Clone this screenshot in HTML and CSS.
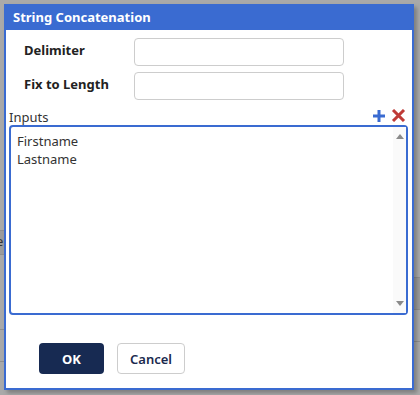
FILE: index.html
```html
<!DOCTYPE html>
<html lang="en">
<head>
    <meta charset="UTF-8">
    <title>String Concatenation</title>
    <link rel="stylesheet" href="styles.css">
</head>
<body>
    <!-- dimmed page behind the modal -->
    <div class="backdrop">
        <div class="bg-col bg-left">
            <div class="bg-row bg-row-dark">e</div>
            <div class="bg-row bg-row-tall"></div>
            <div class="bg-row bg-row-mid"></div>
            <div class="bg-row"></div>
        </div>
        <div class="bg-col bg-right">
            <div class="bg-row bg-row-dark bg-row-mid"></div>
            <div class="bg-row bg-row-mid"></div>
            <div class="bg-row"></div>
        </div>
    </div>

    <div class="dialog">
        <div class="dialog-title">String Concatenation</div>
        <div class="dialog-body">
            <div class="form-grid">
                <label class="field-label" for="delimiter">Delimiter</label>
                <input class="field-input" id="delimiter" type="text">
                <label class="field-label" for="fixLength">Fix to Length</label>
                <input class="field-input" id="fixLength" type="text">
            </div>

            <div class="list-header">
                <span class="list-label">Inputs</span>
                <span class="list-tools">
                    <svg class="tool tool-add" width="12" height="12" viewBox="0 0 12 12">
                        <path d="M6 0v12M0 6h12" stroke="#3a6bd1" stroke-width="3"/>
                    </svg>
                    <svg class="tool tool-remove" width="15" height="13" viewBox="0 0 15 13">
                        <path d="M2 1l11 11M13 1l-11 11" stroke="#bf3b37" stroke-width="3"/>
                    </svg>
                </span>
            </div>

            <div class="list-box">
                <div class="list-items">
                    <div class="list-item">Firstname</div>
                    <div class="list-item">Lastname</div>
                </div>
                <div class="list-scroll">
                    <span class="arrow arrow-up"></span>
                    <span class="arrow arrow-down"></span>
                </div>
            </div>

            <div class="dialog-footer">
                <button class="btn btn-ok">OK</button>
                <button class="btn btn-cancel">Cancel</button>
            </div>
        </div>
    </div>
</body>
</html>
```

FILE: styles.css
```css
body {
    margin: 0;
    font-family: "Noto Sans", "Open Sans", sans-serif;
    background-color: #a9a9a9;
    height: 395px;
    overflow: hidden;
}

.backdrop {
    display: flex;
    justify-content: space-between;
    height: 395px;
}

.bg-col {
    width: 6px;
    display: flex;
    flex-direction: column;
}

.bg-left {
    padding-top: 230px;
}

.bg-right {
    padding-top: 277px;
}

.bg-row {
    height: 23px;
    border-top: 1px solid #8f8f8f;
    font-size: 13px;
    line-height: 20px;
    color: #333;
    text-indent: -4px;
    overflow: hidden;
}

.bg-row-dark {
    background-color: #9b9b9b;
}

.bg-row-tall {
    height: 74px;
}

.bg-row-mid {
    height: 31px;
}

.dialog {
    position: absolute;
    left: 4px;
    top: 4px;
    width: 410px;
    height: 386px;
    box-sizing: border-box;
    border: 2px solid #3a6bd1;
    border-top: none;
    background-color: #fff;
    box-shadow: 3px 3px 4px rgba(0, 0, 0, 0.25);
}

.dialog-title {
    height: 26px;
    margin: 0 -2px;
    padding: 0 9px;
    background-color: #3a6bd1;
    color: #fff;
    font-size: 13px;
    font-weight: bold;
    line-height: 27px;
}

.dialog-body {
    padding: 8px 4px 0 3px;
}

.form-grid {
    display: grid;
    grid-template-columns: 110px 210px;
    row-gap: 6px;
    padding-left: 15px;
    align-items: center;
}

.field-label {
    font-size: 13px;
    font-weight: bold;
    color: #222;
    padding-bottom: 4px;
}

.field-input {
    height: 28px;
    box-sizing: border-box;
    border: 1px solid #cdcdcd;
    border-radius: 4px;
    margin: 0;
    padding: 0 6px;
    font-family: inherit;
}

.list-header {
    display: flex;
    justify-content: space-between;
    align-items: flex-end;
    height: 17px;
    margin-top: 8px;
}

.list-label {
    font-size: 13px;
    color: #333;
    line-height: 16px;
}

.list-tools {
    display: flex;
    gap: 6px;
    align-items: center;
    padding-right: 2px;
    padding-bottom: 3px;
}

.list-box {
    display: flex;
    height: 190px;
    box-sizing: border-box;
    border: 2px solid #3a6bd1;
    border-radius: 4px;
}

.list-items {
    flex: 1;
    padding: 5px 6px;
}

.list-item {
    font-size: 13px;
    line-height: 18px;
    color: #333;
}

.list-scroll {
    width: 13px;
    background-color: #fafafa;
    display: flex;
    flex-direction: column;
    justify-content: space-between;
    align-items: center;
    padding: 7px 0 7px;
}

.arrow {
    width: 0;
    height: 0;
    border-left: 4px solid transparent;
    border-right: 4px solid transparent;
}

.arrow-up {
    border-bottom: 5px solid #8a8a8a;
}

.arrow-down {
    border-top: 5px solid #8a8a8a;
}

.dialog-footer {
    display: flex;
    gap: 13px;
    padding-left: 30px;
    margin-top: 28px;
}

.btn {
    height: 31px;
    border-radius: 4px;
    font-family: inherit;
    font-size: 13px;
    font-weight: bold;
    cursor: pointer;
}

.btn-ok {
    width: 65px;
    border: none;
    background-color: #172a52;
    color: #fff;
}

.btn-cancel {
    width: 68px;
    border: 1px solid #cdcdcd;
    background-color: #fff;
    color: #1b2a4e;
    font-weight: 600;
}
```
